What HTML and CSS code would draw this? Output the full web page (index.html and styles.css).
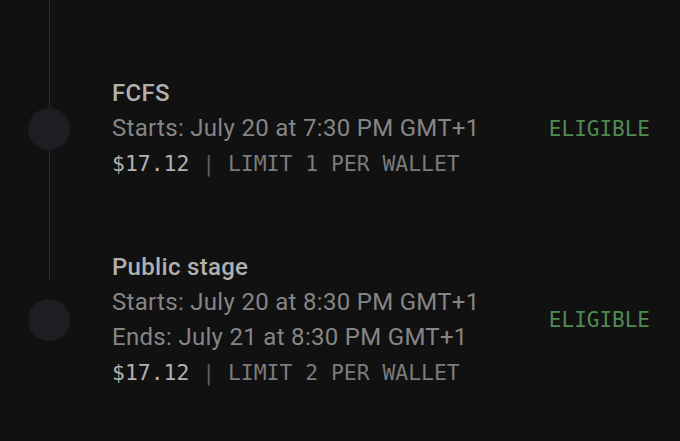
FILE: index.html
```html
<!DOCTYPE html>
<html lang="en">
<head>
    <meta charset="UTF-8">
    <meta name="viewport" content="width=device-width, initial-scale=1.0">
    <title>Mint stages</title>
    <link rel="stylesheet" href="styles.css">
</head>
<body>
    <div class="stages">
        <div class="track"></div>

        <div class="stage">
            <div class="marker"><span class="dot"></span></div>
            <div class="info">
                <div class="name">FCFS</div>
                <div class="time">Starts: July 20 at 7:30 PM GMT+1</div>
                <div class="meta"><span class="price">$17.12</span> <span class="sep">|</span> LIMIT 1 PER WALLET</div>
            </div>
            <div class="status">ELIGIBLE</div>
        </div>

        <div class="stage">
            <div class="marker"><span class="dot"></span></div>
            <div class="info">
                <div class="name">Public stage</div>
                <div class="time">Starts: July 20 at 8:30 PM GMT+1</div>
                <div class="time">Ends: July 21 at 8:30 PM GMT+1</div>
                <div class="meta"><span class="price">$17.12</span> <span class="sep">|</span> LIMIT 2 PER WALLET</div>
            </div>
            <div class="status">ELIGIBLE</div>
        </div>
    </div>
</body>
</html>
```

FILE: styles.css
```css
body {
    margin: 0;
    background-color: #111112;
    font-family: Roboto, "Noto Sans", sans-serif;
    height: 100vh;
    overflow: hidden;
}
.stages {
    position: relative;
    padding-top: 76px;
    display: flex;
    flex-direction: column;
    gap: 69px;
}
.track {
    position: absolute;
    left: 49px;
    top: 0;
    width: 1px;
    height: 280px;
    background-color: #2a2a2f;
}
.stage {
    display: flex;
    align-items: center;
}
.marker {
    width: 112px;
    flex-shrink: 0;
    display: flex;
}
.dot {
    position: relative;
    margin-left: 28px;
    width: 42px;
    height: 42px;
    border-radius: 50%;
    background-color: #1d1e23;
}
.info {
    flex: 1;
}
.name,
.time,
.meta {
    line-height: 35px;
    white-space: nowrap;
}
.name {
    font-size: 24px;
    font-weight: 500;
    letter-spacing: 0.3px;
    color: #b0b0b0;
}
.time {
    font-size: 24px;
    letter-spacing: 0.3px;
    color: #858585;
}
.meta {
    font-family: "DejaVu Sans Mono", monospace;
    font-size: 21.4px;
    color: #7b7b7b;
}
.price {
    color: #b2b2b2;
}
.sep {
    color: #5e5e5e;
}
.status {
    font-family: "DejaVu Sans Mono", monospace;
    font-size: 21px;
    color: #4f8a53;
    padding-right: 30px;
}
```
